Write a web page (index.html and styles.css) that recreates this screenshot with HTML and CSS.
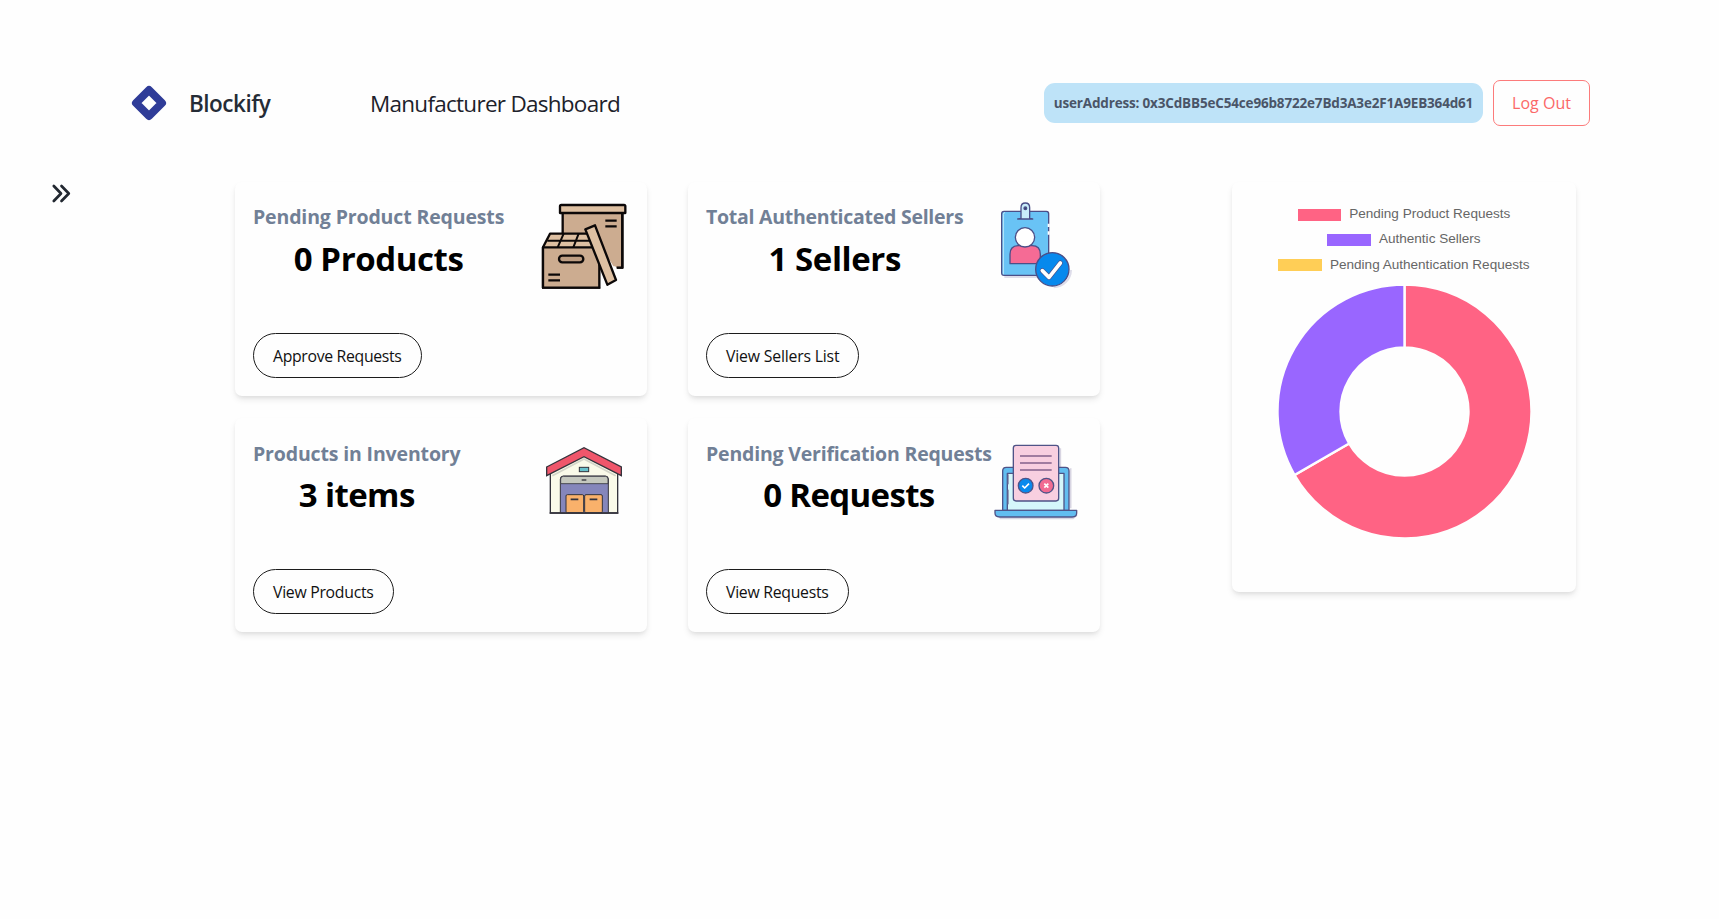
FILE: index.html
```html
<!DOCTYPE html>
<html lang="en">
<head>
<meta charset="utf-8">
<title>Blockify</title>
<link rel="stylesheet" href="styles.css">
</head>
<body>
<header class="header">
  <svg class="logo" viewBox="0 0 36 36"><path d="M18 5 31 18 18 31 5 18Z" fill="none" stroke="#2f3c98" stroke-width="8" stroke-linejoin="round"/></svg>
  <span class="brand">Blockify</span>
  <h1 class="page-title">Manufacturer Dashboard</h1>
  <span class="address"><span class="address-text">userAddress: 0x3CdBB5eC54ce96b8722e7Bd3A3e2F1A9EB364d61</span></span>
  <button class="logout"><span class="logout-text">Log Out</span></button>
</header>
<main class="main">
  <svg class="expand" viewBox="0 0 20 20"><path d="M2.8 2 10 9.5 2.8 17M10.5 2 17.8 9.5 10.5 17" fill="none" stroke="#222831" stroke-width="2.7" stroke-linecap="round" stroke-linejoin="round"/></svg>
  <section class="cards">
    <article class="card">
      <div class="card-top">
        <div class="card-text"><h2 class="label l1">Pending Product Requests</h2><p class="value v1">0 Products</p></div>
        <svg class="icon" viewBox="15 0 300 315" stroke="#0c0808" stroke-width="7" stroke-linejoin="round">
          <path d="M98 54H277V218H212L98 115Z" fill="#ccac90" stroke="none"/>
          <path d="M98 54V115M277 54V218H260" fill="none"/>
          <path d="M94 30H282Q286 30 286 34V54H90V34Q90 30 94 30Z" fill="#dec0a2"/>
          <path d="M226 77H260M226 94H260" fill="none"/>
          <path d="M60 116H178L208 157V278H39V157Z" fill="#dec0a2"/>
          <path d="M39 157H208V278H39Z" fill="#ccac90"/>
          <path d="M52 137H178M101 116 83 157M146 116 130 157" fill="none" stroke-width="6"/>
          <rect x="87" y="182" width="73" height="20" rx="10" fill="#bd9d82"/>
          <path d="M55 239H90M55 256H90" fill="none"/>
          <path d="M212 166 260 218V230L235 278H212Z" fill="#fefefe" stroke="none"/>
          <path d="M277 54V218H260" fill="none"/>
          <path d="M202 130 273 130V214H250Z" fill="#ccac90" stroke="none"/>
          <path d="M166 103 195 91 258 255 232 269Z" fill="#dec0a2"/>
        </svg>
      </div>
      <button class="action"><span class="b1">Approve Requests</span></button>
    </article>
    <article class="card">
      <div class="card-top">
        <div class="card-text"><h2 class="label l2">Total Authenticated Sellers</h2><p class="value v2">1 Sellers</p></div>
        <svg class="icon" viewBox="9 0 300 315" stroke="#4b4f88" stroke-width="4" stroke-linejoin="round">
          <path d="M58 246H190M258 225A53 53 0 0 1 206 277" fill="none" stroke="#deddea" stroke-width="6"/>
          <rect x="50" y="49" width="141" height="192" rx="7" fill="#69c3f5"/>
          <path d="M55 238V58Q55 53 60 53" fill="none" stroke="#c0ecfc" stroke-width="3"/>
          <path d="M191 86V96M191 109V119" stroke="#fff" stroke-width="6"/>
          <path d="M108 70V38Q108 24 121 24T134 38V70L143 72H98Z" fill="#c8edfa"/>
          <circle cx="121" cy="40" r="4" fill="#30406d"/>
          <path d="M75 206V178Q75 152 101 152H141Q166 152 166 178V206Z" fill="#f56b95"/>
          <circle cx="120" cy="127" r="29" fill="#fff"/>
          <circle cx="202" cy="223" r="50" fill="#0789ed"/>
          <path d="M172 227 192 247 226 204" fill="none" stroke="#4b4f88" stroke-width="15" stroke-linecap="round"/>
          <path d="M172 227 192 247 226 204" fill="none" stroke="#fff" stroke-width="11" stroke-linecap="round"/>
        </svg>
      </div>
      <button class="action"><span class="b2">View Sellers List</span></button>
    </article>
    <article class="card lower">
      <div class="card-top">
        <div class="card-text"><h2 class="label l3">Products in Inventory</h2><p class="value v3">3 items</p></div>
        <svg class="icon" viewBox="0 -12 300 315" stroke="#34333c" stroke-width="4" stroke-linejoin="miter">
          <path d="M46 112 147 55 248 112V234H46Z" fill="#fafae9"/>
          <path d="M52 122 147 72 242 122" fill="none" stroke="#d3d4c8" stroke-width="5"/>
          <path d="M76 234V132Q76 123 85 123H211Q220 123 220 132V234Z" fill="#8586bb" stroke-width="3"/>
          <path d="M77 146V132Q77 124 85 124H211Q219 124 219 132V146Z" fill="#c5c8be" stroke-width="2.5"/>
          <path d="M140 135H154" stroke-width="4"/>
          <rect x="133" y="97" width="28" height="13" fill="#69c2cc" stroke-width="3"/>
          <rect x="93" y="179" width="53" height="54" rx="4" fill="#f9b16b" stroke-width="3"/>
          <rect x="149" y="179" width="53" height="54" rx="4" fill="#f9b16b" stroke-width="3"/>
          <path d="M107 193H130M164 193H187" stroke-width="5"/>
          <path d="M35 96 147 38 259 96V122L147 65 35 122Z" fill="#f0566b"/>
          <path d="M44 234H250"/>
        </svg>
      </div>
      <button class="action"><span class="b3">View Products</span></button>
    </article>
    <article class="card lower">
      <div class="card-top">
        <div class="card-text"><h2 class="label l4">Pending Verification Requests</h2><p class="value v4">0 Requests</p></div>
        <svg class="icon" viewBox="9 -12 300 315" stroke="#4f5387" stroke-width="4" stroke-linejoin="round">
          <path d="M44 250H264L276 240M257 100V220M226 40V198" fill="none" stroke="#d8d5e2" stroke-width="5"/>
          <path d="M53 226V108Q53 97 64 97H241Q252 97 252 108V226Z" fill="#62bdf0"/>
          <path d="M67 226V115H237V226Z" fill="#d5f7fb"/>
          <path d="M70 118V148M70 164V208" stroke="#8a8cad" stroke-width="3" fill="none"/>
          <path d="M30 226H275V234Q275 246 262 246H44Q30 246 30 234Z" fill="#62bdf0"/>
          <rect x="85" y="31" width="136" height="167" rx="8" fill="#f8cfe0"/>
          <path d="M105 63H200M105 84H200M105 105H200" fill="none" stroke="#82618a" stroke-width="5"/>
          <circle cx="122" cy="152" r="22" fill="#0789ed"/>
          <circle cx="184" cy="152" r="22" fill="#f16b92"/>
          <path d="M112 152 119 159 132 146M178 146 190 158M190 146 178 158" fill="none" stroke="#fff" stroke-width="5"/>
        </svg>
      </div>
      <button class="action"><span class="b4">View Requests</span></button>
    </article>
  </section>
  <aside class="chart-card">
    <ul class="legend">
      <li class="legend-row"><i class="swatch pink"></i><span>Pending Product Requests</span></li>
      <li class="legend-row"><i class="swatch purple"></i><span>Authentic Sellers</span></li>
      <li class="legend-row"><i class="swatch yellow"></i><span>Pending Authentication Requests</span></li>
    </ul>
    <svg class="donut" viewBox="-127.5 -126.5 254 254" stroke="#fefefe" stroke-width="2.4">
      <path d="M0-127A127 127 0 1 1-109.98 63.5L-55.43 32A64 64 0 1 0 0-64Z" fill="#ff6384"/>
      <path d="M-109.98 63.5A127 127 0 0 1 0-127V-64A64 64 0 0 0-55.43 32Z" fill="#9966ff"/>
    </svg>
  </aside>
</main>
</body>
</html>
```
FILE: styles.css
```css
* { box-sizing: border-box; }
body { margin: 0; min-height: 919px; background: #fefefe; font-family: "Open Sans", "Noto Sans", sans-serif; color: #000; }
h1, h2, p, ul { margin: 0; padding: 0; }
button { font-family: inherit; background: transparent; padding: 0; white-space: nowrap; }
.header { display: flex; align-items: center; height: 182px; padding: 80px 129px 56px 131px; white-space: nowrap; }
.logo { width: 36px; height: 36px; flex: none; }
.brand { width: 181px; margin-left: 22px; font-size: 22.5px; font-weight: 600; letter-spacing: -0.5px; color: #252c36; }
.page-title { font-size: 22.5px; font-weight: 400; letter-spacing: -0.73px; color: #1d222b; }
.address { display: flex; align-items: center; justify-content: center; width: 439px; height: 40px; margin-left: auto; margin-right: 10px; border-radius: 11px; background: #bee3f8; }
.address-text { font-size: 13.5px; font-weight: 700; letter-spacing: -0.17px; color: #4a5568; }
.logout { width: 97px; height: 46px; border: 1.5px solid #fc7b7b; border-radius: 7px; color: #fb6868; font-size: 16px; font-weight: 500; letter-spacing: 0; }
.main { display: flex; align-items: flex-start; }
.expand { width: 20px; height: 20px; margin: 2px 0 0 51px; flex: none; }
.cards { display: grid; grid-template-columns: 412px 412px; grid-auto-rows: 214px; gap: 22px 41px; margin-left: 164px; }
.card, .chart-card { border-radius: 7px; background: #fefefe; box-shadow: 0 4px 7px -1px rgba(0,0,0,.1), 0 2px 4px -1px rgba(0,0,0,.06); }
.card { display: flex; flex-direction: column; align-items: flex-start; justify-content: space-between; padding: 13px 12px 18px 18px; }
.card-top { display: grid; grid-template-columns: 282px 100px; height: 105px; }
.card-text { justify-self: start; text-align: center; white-space: nowrap; padding-top: 9px; }
.label { font-size: 19.5px; line-height: 26px; font-weight: 700; color: #718096; }
.value { font-size: 33px; line-height: 44px; font-weight: 700; padding-top: 7px; }
.l1 { letter-spacing: -0.14px; }
.l2 { letter-spacing: -0.26px; }
.l3 { letter-spacing: -0.15px; }
.l4 { letter-spacing: -0.19px; }
.v1 { letter-spacing: -0.4px; }
.v2 { letter-spacing: -0.4px; }
.v3 { letter-spacing: -0.6px; }
.v4 { letter-spacing: -0.65px; }
.lower .label { padding-top: 1px; }
.lower .value { padding-top: 6px; }
.icon { width: 100px; height: 105px; fill: none; }
.action { height: 45px; padding: 0 19px; border: 1.5px solid #1c1c1c; border-radius: 23px; font-size: 15.8px; font-weight: 500; color: #111; }
.b1 { letter-spacing: -0.32px; }
.b2 { letter-spacing: -0.18px; }
.b3 { letter-spacing: -0.28px; }
.b4 { letter-spacing: -0.28px; }
.chart-card { width: 344px; height: 410px; margin-left: 132px; padding-top: 19px; display: flex; flex-direction: column; align-items: center; }
.legend { list-style: none; font: 13.55px "Liberation Sans", Arial, sans-serif; color: #666; }
.legend-row { display: flex; align-items: center; justify-content: center; gap: 8px; height: 25.3px; white-space: nowrap; }
.swatch { width: 43.5px; height: 12px; margin-top: 2.5px; }
.pink { background: #ff6384; }
.purple { background: #9966ff; }
.yellow { background: #ffce56; }
.donut { width: 254px; height: 254px; margin-top: 8px; }
```
